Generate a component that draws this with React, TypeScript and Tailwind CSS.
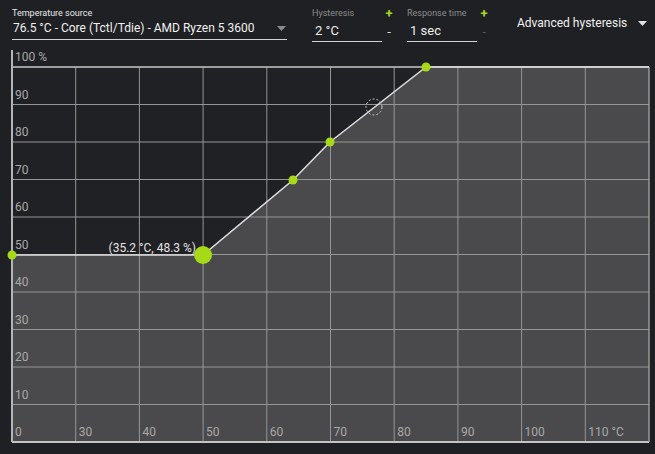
const GREEN = "#a6d916";

const xs = [0, 30, 40, 50, 60, 70, 80, 90, 100, 110];
const left = 12;
const right = 649;
const top = 67;
const bottom = 442;
const colW = (right - left) / 10;
const rowH = (bottom - top) / 10;

const curve: [number, number][] = [
  [12, 255],
  [203, 255],
  [293, 180],
  [330, 142],
  [426, 67],
  [649, 67],
];

function Triangle({ color, className }: { color: string; className?: string }) {
  return (
    <svg width="9" height="5" viewBox="0 0 9 5" className={className}>
      <path d="M0 0 L9 0 L4.5 5 Z" fill={color} />
    </svg>
  );
}

function Field({ label, value, plusMinusMuted }: { label: string; value: string; plusMinusMuted?: boolean }) {
  return (
    <div className="flex items-start">
      <div className="flex flex-col w-[70px]">
        <span className="text-[9px] leading-[11px] text-[#8c8c8c]">{label}</span>
        <div className="h-[23px] pt-[4px] border-b border-[#d2d2d2]">
          <span className="block text-[13px] leading-[16px] text-[#ececec] ml-[3px]">{value}</span>
        </div>
      </div>
      <div className="flex flex-col items-center w-[10px] ml-[2px] -mt-[1px]">
        <span className="text-[13px] leading-[13px] font-bold" style={{ color: GREEN }}>
          +
        </span>
        <span
          className={
            plusMinusMuted
              ? "text-[13px] leading-[16px] mt-[4px] text-[#555]"
              : "text-[13px] leading-[16px] mt-[4px] text-[#e0e0e0]"
          }
        >
          -
        </span>
      </div>
    </div>
  );
}

function Chart() {
  const fill = [...curve, [right, bottom], [left, bottom]].map((p) => p.join(",")).join(" ");
  return (
    <svg width="655" height="406" viewBox="0 48 655 406" className="block">
      <rect x={left} y={top} width={right - left} height={bottom - top} fill="#202124" />
      <polygon points={fill} fill="#4a4a4c" />
      {Array.from({ length: 11 }, (_, i) => (
        <line key={"h" + i} x1={left} x2={right} y1={top + i * rowH} y2={top + i * rowH} stroke="#959595" strokeWidth="1" />
      ))}
      {Array.from({ length: 11 }, (_, i) => (
        <line key={"v" + i} x1={left + i * colW} x2={left + i * colW} y1={top} y2={bottom} stroke="#959595" strokeWidth="1" />
      ))}
      <line x1={left} x2={left} y1={50} y2={bottom} stroke="#b4b4b4" strokeWidth="2" />
      <line x1={left} x2={right} y1={bottom} y2={bottom} stroke="#c4c4c4" strokeWidth="2" />
      <line x1={left} x2={right} y1={top} y2={top} stroke="#b4b4b4" strokeWidth="1.5" />
      <line x1={right} x2={right} y1={top} y2={bottom} stroke="#9a9a9a" strokeWidth="1" />
      <polyline points={curve.map((p) => p.join(",")).join(" ")} fill="none" stroke="#dedede" strokeWidth="1.5" />
      <g fill="#a9a9a9" fontFamily="Roboto, sans-serif" fontSize="12">
        {Array.from({ length: 10 }, (_, i) => {
          const v = 100 - i * 10;
          return (
            <text key={"y" + v} x={15} y={top + i * rowH - 6}>
              {v === 100 ? "100 %" : v}
            </text>
          );
        })}
        {xs.map((v, i) => (
          <text key={"x" + v} x={left + i * colW + 3} y={bottom - 6}>
            {v === 110 ? "110 °C" : v}
          </text>
        ))}
      </g>
      <text x={196} y={252} textAnchor="end" fill="#e4e4e4" fontFamily="Roboto, sans-serif" fontSize="12">
        (35.2 °C, 48.3 %)
      </text>
      <circle cx={374} cy={107} r={8} fill="none" stroke="#cfcfcf" strokeWidth="1" strokeDasharray="2 2" />
      {curve.slice(0, 5).map(([x, y], i) => (
        <circle key={"p" + i} cx={x} cy={y} r={i === 1 ? 9 : 4.5} fill={GREEN} />
      ))}
    </svg>
  );
}

export default function App() {
  return (
    <div className="w-[655px] h-[454px] bg-[#1f2023] overflow-hidden font-['Roboto',sans-serif]">
      <div className="flex items-start h-[48px] pt-[8px] pl-[12px]">
        <div className="flex flex-col w-[275px]">
          <span className="text-[9px] leading-[11px] text-[#e8e8e8]">Temperature source</span>
          <div className="flex items-center justify-between h-[21px] border-b border-[#d2d2d2]">
            <span className="text-[12px] leading-[16px] text-[#f0f0f0] ml-[1px] -mt-[2px]">
              76.5 °C - Core (Tctl/Tdie) - AMD Ryzen 5 3600
            </span>
            <Triangle color="#8a8a8a" className="mr-[1px] -mt-[2px]" />
          </div>
        </div>
        <div className="ml-[25px]">
          <Field label="Hysteresis" value="2 °C" />
        </div>
        <div className="ml-[13px]">
          <Field label="Response time" value="1 sec" plusMinusMuted />
        </div>
        <div className="flex items-center ml-[28px] mt-[7px]">
          <span className="text-[12px] leading-[16px] text-[#f0f0f0]">Advanced hysteresis</span>
          <Triangle color="#e0e0e0" className="ml-[11px]" />
        </div>
      </div>
      <Chart />
    </div>
  );
}
